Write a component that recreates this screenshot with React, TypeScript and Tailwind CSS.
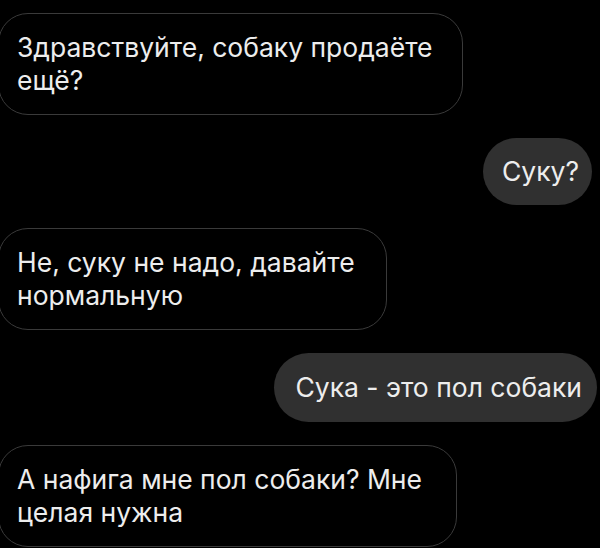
export default function App() {
  return (
    <main
      className="flex h-[548px] w-[600px] flex-col gap-[23px] overflow-hidden bg-black pt-[13px] text-[26.5px] leading-[33px] text-[#ededed] antialiased"
      style={{ fontFamily: 'Inter, "Liberation Sans", sans-serif' }}
    >
      {/* incoming */}
      <div className="-ml-[2px] w-[465px] shrink-0 whitespace-nowrap rounded-[30px] border border-[#3a3a3a] bg-black pt-[17px] pb-[17px] pl-[18px] pr-[20px]">
        Здравствуйте, собаку продаёте
        <br />
        ещё?
      </div>

      {/* outgoing */}
      <div className="mr-[8px] flex shrink-0 justify-end">
        <div className="whitespace-nowrap rounded-full bg-[#303030] py-[17px] pl-[19px] pr-[13px]">
          Суку?
        </div>
      </div>

      <div className="-ml-[2px] w-[389px] shrink-0 whitespace-nowrap rounded-[30px] border border-[#3a3a3a] bg-black pt-[17px] pb-[17px] pl-[18px] pr-[20px]">
        Не, суку не надо, давайте
        <br />
        нормальную
      </div>

      <div className="mr-[3px] flex shrink-0 justify-end">
        <div className="whitespace-nowrap rounded-full bg-[#303030] py-[18px] pl-[21px] pr-[15px]">
          Сука - это пол собаки
        </div>
      </div>

      <div className="-ml-[2px] w-[459px] shrink-0 whitespace-nowrap rounded-[30px] border border-[#3a3a3a] bg-black pt-[17px] pb-[17px] pl-[18px] pr-[20px]">
        А нафига мне пол собаки? Мне
        <br />
        целая нужна
      </div>
    </main>
  );
}
